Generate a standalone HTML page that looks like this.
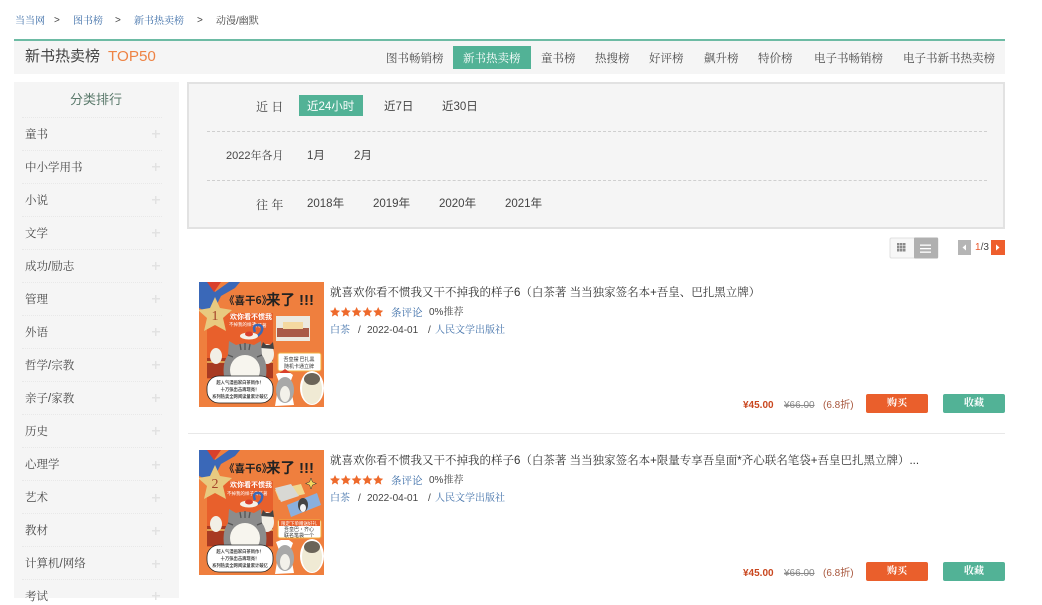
<!DOCTYPE html>
<html lang="zh"><head><meta charset="utf-8"><title>新书热卖榜</title>
<style>
html,body{margin:0;padding:0;background:#fff}
body{width:1042px;height:598px;overflow:hidden;position:relative;font-family:"Liberation Sans","Noto Serif CJK SC",serif;font-size:11.5px;color:#444;filter:blur(.3px)}
.a{position:absolute;white-space:nowrap;line-height:16px}
.s{font-family:"Liberation Sans","Noto Sans CJK SC",sans-serif}
.b{color:#3d6ea8}
.bx{position:absolute}
.cat{position:absolute;left:25px;line-height:16px;color:#4a4a4a;white-space:nowrap}
.plus{position:absolute;left:152px;width:8px;height:8px;background:linear-gradient(#e2e2e2,#e2e2e2) center/8px 1.5px no-repeat,linear-gradient(#e2e2e2,#e2e2e2) center/1.5px 8px no-repeat}
.sep{position:absolute;left:22px;width:140px;border-top:1px dotted #e8e8e8}
.tab{position:absolute;top:51px;line-height:16px;color:#4d4d4d;white-space:nowrap}
.dash{position:absolute;left:207px;width:780px;border-top:1px dashed #cfcfcf}
.btn{position:absolute;width:62px;height:19px;line-height:20px;text-align:center;color:#fff;font-size:10px;font-weight:700;border-radius:2px}
</style></head><body>
<span class="a b" style="left:15px;top:14px;font-size:10px">当当网</span>
<span class="a" style="left:54px;top:13px;font-size:10px">&gt;</span>
<span class="a b" style="left:73px;top:14px;font-size:10px">图书榜</span>
<span class="a" style="left:115px;top:13px;font-size:10px">&gt;</span>
<span class="a b" style="left:134px;top:14px;font-size:10px">新书热卖榜</span>
<span class="a" style="left:197px;top:13px;font-size:10px">&gt;</span>
<span class="a" style="left:216px;top:14px;font-size:10px">动漫/幽默</span>

<div class="bx" style="left:14px;top:39px;width:991px;height:35px;background:#f5f5f5;border-top:2px solid #6dbba4;box-sizing:border-box"></div>
<span class="a s" style="left:25px;top:47px;font-size:15px;line-height:20px;color:#444">新书热卖榜</span>
<span class="a s" style="left:108px;top:47px;font-size:15.200px;line-height:20px;color:#ee8344">TOP50</span>
<div class="bx" style="left:453px;top:46px;width:78px;height:23px;background:#52b296"></div>
<span class="tab" style="left:386px">图书畅销榜</span>
<span class="tab" style="left:463px;color:#fff">新书热卖榜</span>
<span class="tab" style="left:541px">童书榜</span>
<span class="tab" style="left:595px">热搜榜</span>
<span class="tab" style="left:649px">好评榜</span>
<span class="tab" style="left:704px">飙升榜</span>
<span class="tab" style="left:758px">特价榜</span>
<span class="tab" style="left:814px">电子书畅销榜</span>
<span class="tab" style="left:903px">电子书新书热卖榜</span>

<div class="bx" style="left:14px;top:82px;width:165px;height:516px;background:#f5f5f5"></div>
<span class="a s" style="left:70px;top:91px;font-size:13px;line-height:18px;color:#5b7a6c">分类排行</span>
<div class="sep" style="top:117px"></div><span class="cat" style="top:127px">童书</span><i class="plus" style="top:130px"></i>
<div class="sep" style="top:150px"></div><span class="cat" style="top:160px">中小学用书</span><i class="plus" style="top:163px"></i>
<div class="sep" style="top:183px"></div><span class="cat" style="top:193px">小说</span><i class="plus" style="top:196px"></i>
<div class="sep" style="top:216px"></div><span class="cat" style="top:226px">文学</span><i class="plus" style="top:229px"></i>
<div class="sep" style="top:249px"></div><span class="cat" style="top:259px">成功/励志</span><i class="plus" style="top:262px"></i>
<div class="sep" style="top:282px"></div><span class="cat" style="top:292px">管理</span><i class="plus" style="top:295px"></i>
<div class="sep" style="top:315px"></div><span class="cat" style="top:325px">外语</span><i class="plus" style="top:328px"></i>
<div class="sep" style="top:348px"></div><span class="cat" style="top:358px">哲学/宗教</span><i class="plus" style="top:361px"></i>
<div class="sep" style="top:381px"></div><span class="cat" style="top:391px">亲子/家教</span><i class="plus" style="top:394px"></i>
<div class="sep" style="top:414px"></div><span class="cat" style="top:424px">历史</span><i class="plus" style="top:427px"></i>
<div class="sep" style="top:447px"></div><span class="cat" style="top:457px">心理学</span><i class="plus" style="top:461px"></i>
<div class="sep" style="top:480px"></div><span class="cat" style="top:490px">艺术</span><i class="plus" style="top:494px"></i>
<div class="sep" style="top:513px"></div><span class="cat" style="top:523px">教材</span><i class="plus" style="top:527px"></i>
<div class="sep" style="top:546px"></div><span class="cat" style="top:556px">计算机/网络</span><i class="plus" style="top:560px"></i>
<div class="sep" style="top:579px"></div><span class="cat" style="top:589px">考试</span><i class="plus" style="top:592px"></i>

<div class="bx" style="left:187px;top:82px;width:818px;height:147px;box-sizing:border-box;background:#f5f5f5;border:2px solid #e2e2e2"></div>
<span class="a" style="left:256px;top:99px;font-size:12px">近 日</span>
<div class="bx" style="left:299px;top:95px;width:64px;height:21px;background:#52b296"></div>
<span class="a s" style="left:307px;top:98.500px;color:#fff">近24小时</span>
<span class="a s" style="left:384px;top:98.500px">近7日</span>
<span class="a s" style="left:442px;top:98.500px">近30日</span>
<div class="dash" style="top:131px"></div>
<span class="a" style="left:226px;top:148px;font-size:11px">2022年各月</span>
<span class="a s" style="left:307px;top:147.500px">1月</span>
<span class="a s" style="left:354px;top:147.500px">2月</span>
<div class="dash" style="top:180px"></div>
<span class="a" style="left:256px;top:197px;font-size:12px">往 年</span>
<span class="a s" style="left:307px;top:195.500px">2018年</span>
<span class="a s" style="left:373px;top:195.500px">2019年</span>
<span class="a s" style="left:439px;top:195.500px">2020年</span>
<span class="a s" style="left:505px;top:195.500px">2021年</span>

<svg class="bx" style="left:889px;top:237px" width="116" height="22" viewBox="0 0 116 22">
<rect x="1" y="1" width="48" height="20" rx="1.500" fill="#f7f7f7" stroke="#e0e0e0"/>
<rect x="25" y="0.500" width="24" height="21" rx="1" fill="#b0b0b0"/>
<g fill="#8a8a8a"><rect x="8" y="6" width="2.500" height="2.500"/><rect x="11" y="6" width="2.500" height="2.500"/><rect x="14" y="6" width="2.500" height="2.500"/><rect x="8" y="9" width="2.500" height="2.500"/><rect x="11" y="9" width="2.500" height="2.500"/><rect x="14" y="9" width="2.500" height="2.500"/><rect x="8" y="12" width="2.500" height="2.500"/><rect x="11" y="12" width="2.500" height="2.500"/><rect x="14" y="12" width="2.500" height="2.500"/></g>
<g fill="#fff"><rect x="31" y="7.500" width="11" height="1.300"/><rect x="31" y="11" width="11" height="1.300"/><rect x="31" y="14.500" width="11" height="1.300"/></g>
<rect x="69" y="3" width="13" height="15" fill="#b5b5b5"/><path d="M77 7.500v6l-3.500-3z" fill="#fff"/>
<rect x="102" y="3" width="14" height="15" fill="#ee5e2d"/><path d="M107 7.500v6l3.500-3z" fill="#fff"/>
</svg>
<span class="a s" style="left:975px;top:240px;font-size:10px;color:#444"><span style="color:#e8562a">1</span>/3</span>

<svg class="bx" style="left:199px;top:282px" width="125" height="125" viewBox="0 0 125 125">
<rect width="125" height="125" fill="#ef7f3e"/>
<path d="M0 0h10l6 10 14-10h11l-5 6-14 8-6 12-8 4-8-4z" fill="#3a68b8"/><path d="M8 0h14l-7 10z" fill="#d9402c"/>
<rect x="8" y="31" width="66" height="66" fill="#e8602c"/>
<text x="31" y="37" font-size="7" fill="#fff" font-weight="700" font-family="Noto Sans CJK SC,sans-serif">欢你看不惯我</text>
<text x="30" y="44" font-size="4.500" fill="#fff" font-family="Noto Sans CJK SC,sans-serif">不掉我的样子</text>
<text x="54" y="45" font-size="4.500" fill="#fff" font-family="Noto Sans CJK SC,sans-serif">白茶著</text>
<text x="25" y="22" font-size="10.500" font-weight="700" fill="#222" font-family="Noto Sans CJK SC,sans-serif">《喜干6》</text>
<text x="67" y="23" font-size="14.500" font-weight="700" fill="#222" font-family="Noto Sans CJK SC,sans-serif">来了</text>
<text x="100" y="23" font-size="15" font-weight="700" fill="#222" font-family="Liberation Sans,sans-serif">!!!</text>
<path d="M56 50q-3-7 3-7 5 0 4 5-1 4-5 6" fill="none" stroke="#3a68b8" stroke-width="2.500"/>
<path d="M16 15l5 11 12 2-9 8 3 13-11-6-11 6 3-13-9-8 12-2z" fill="#e8ca80"/>
<text x="16" y="38" text-anchor="middle" font-size="14" fill="#a4442a" font-family="Liberation Serif,serif">1</text>
<rect x="8" y="76" width="66" height="20" fill="#a83a22"/><path d="M8 80h66" stroke="#f0c060" stroke-width="1.500"/>
<ellipse cx="17" cy="74" rx="6" ry="8" fill="#f2efe6"/><ellipse cx="68" cy="72" rx="7" ry="10" fill="#f2efe6"/><path d="M62 66l2-6 3 3h4l3-3 1 7z" fill="#444"/>
<path d="M26 100q-4-18 3-27l1-14 7 4q9-3 18 0l7-4 1 14q7 9 3 27z" fill="#8c8c8c"/>
<ellipse cx="46" cy="88" rx="15" ry="15" fill="#f7f5ee"/>
<path d="M41 62l1 6M46 61v7M51 62l-1 6M29 73l5 2M63 73l-5 2" stroke="#555" stroke-width="1.300"/>
<ellipse cx="50" cy="54" rx="9" ry="3.500" fill="#f5f1e8"/><ellipse cx="50" cy="52" rx="4" ry="2.500" fill="#d9402c"/>
<rect x="77" y="34" width="34" height="25" fill="#ece9e0"/><rect x="78" y="46" width="32" height="9" fill="#a95a48"/><rect x="84" y="40" width="20" height="7" fill="#f4d8a0"/>
<rect x="79" y="71" width="43" height="18" rx="2" fill="#fff" stroke="#f0b040"/>
<text x="100" y="79" text-anchor="middle" font-size="5" fill="#333" font-family="Noto Sans CJK SC,sans-serif">吾皇摆 巴扎黑</text>
<text x="100" y="86" text-anchor="middle" font-size="5" fill="#333" font-family="Noto Sans CJK SC,sans-serif">随机卡通立牌</text>
<rect x="8" y="94" width="66" height="27" rx="12" fill="#fff" stroke="#222" stroke-width=".800"/>
<g font-size="4.300" fill="#444" text-anchor="middle" font-family="Noto Sans CJK SC,sans-serif" font-weight="700"><text x="41" y="102">超人气漫画家白茶新作！</text><text x="41" y="109">十万张出击再现亮！</text><text x="41" y="116">系列热卖全网阅读量累计破亿</text></g>
<path d="M76 124l4-24-3-8 5-2 8 0 4 3-3 8 4 22z" fill="#fff"/>
<ellipse cx="86" cy="108" rx="9" ry="13" fill="#a8a8a8"/><ellipse cx="86" cy="112" rx="5" ry="8" fill="#f3f1ea"/><path d="M80 91h12l-6-4z" fill="#d9402c"/>
<ellipse cx="113" cy="106" rx="12" ry="17" fill="#fff"/><ellipse cx="113" cy="107" rx="10" ry="15" fill="#f0ead4"/><ellipse cx="113" cy="97" rx="8" ry="6" fill="#6b6458"/>
</svg>
<span class="a" style="left:330px;top:285px;color:#333">就喜欢你看不惯我又干不掉我的样子6（白茶著 当当独家签名本+吾皇、巴扎黑立牌）</span>
<svg class="bx" style="left:330px;top:307px" width="54" height="10" viewBox="0 0 54 10"><g fill="#ee6a2c"><path d="M5 0l1.500 3.300 3.500.4-2.600 2.400.7 3.500L5 7.800 1.900 9.600l.7-3.500L0 3.700l3.500-.4z"/><path transform="translate(10.800)" d="M5 0l1.500 3.300 3.500.4-2.600 2.400.7 3.500L5 7.800 1.900 9.600l.7-3.500L0 3.700l3.500-.4z"/><path transform="translate(21.600)" d="M5 0l1.500 3.300 3.500.4-2.600 2.400.7 3.500L5 7.800 1.900 9.600l.7-3.500L0 3.700l3.500-.4z"/><path transform="translate(32.400)" d="M5 0l1.500 3.300 3.500.4-2.600 2.400.7 3.500L5 7.800 1.900 9.600l.7-3.500L0 3.700l3.500-.4z"/><path transform="translate(43.200)" d="M5 0l1.500 3.300 3.500.4-2.600 2.400.7 3.500L5 7.800 1.900 9.600l.7-3.500L0 3.700l3.500-.4z"/></g></svg>
<span class="a b" style="left:391px;top:304.500px;font-size:10.500px">条评论</span>
<span class="a" style="left:429px;top:304.500px;font-size:10px">0%推荐</span>
<span class="a b" style="left:330px;top:322.500px;font-size:10px">白茶</span>
<span class="a s" style="left:358px;top:322.500px;font-size:10px;color:#444">/</span>
<span class="a s" style="left:367px;top:322.500px;font-size:10px;color:#444">2022-04-01</span>
<span class="a s" style="left:428px;top:322.500px;font-size:10px;color:#444">/</span>
<span class="a b" style="left:435px;top:322.500px;font-size:10px">人民文学出版社</span>
<span class="a s" style="left:743px;top:398px;font-size:10px;font-weight:700;color:#c9471f">¥45.00</span>
<span class="a s" style="left:784px;top:398px;font-size:10px;color:#888;text-decoration:line-through">¥66.00</span>
<span class="a s" style="left:823px;top:398px;font-size:10px;color:#a8573d">(6.8折)</span>
<div class="btn" style="left:866px;top:394px;background:#ea5f2c">购买</div>
<div class="btn" style="left:943px;top:394px;background:#52b296">收藏</div>
<div class="bx" style="left:188px;top:433px;width:817px;border-top:1px solid #e8e8e8"></div>

<svg class="bx" style="left:199px;top:450px" width="125" height="125" viewBox="0 0 125 125">
<rect width="125" height="125" fill="#ef7f3e"/>
<path d="M0 0h10l6 10 14-10h11l-5 6-14 8-6 12-8 4-8-4z" fill="#3a68b8"/><path d="M8 0h14l-7 10z" fill="#d9402c"/>
<rect x="8" y="31" width="66" height="66" fill="#e8602c"/>
<text x="31" y="37" font-size="7" fill="#fff" font-weight="700" font-family="Noto Sans CJK SC,sans-serif">欢你看不惯我</text>
<text x="28" y="45" font-size="4.500" fill="#fff" font-family="Noto Sans CJK SC,sans-serif">不掉我的样子</text>
<text x="55" y="45" font-size="4.500" fill="#fff" font-family="Noto Sans CJK SC,sans-serif">白茶著</text>
<text x="25" y="22" font-size="10.500" font-weight="700" fill="#222" font-family="Noto Sans CJK SC,sans-serif">《喜干6》</text>
<text x="67" y="23" font-size="14.500" font-weight="700" fill="#222" font-family="Noto Sans CJK SC,sans-serif">来了</text>
<text x="100" y="23" font-size="15" font-weight="700" fill="#222" font-family="Liberation Sans,sans-serif">!!!</text>
<path d="M56 50q-3-7 3-7 5 0 4 5-1 4-5 6" fill="none" stroke="#3a68b8" stroke-width="2.500"/>
<path d="M16 15l5 11 12 2-9 8 3 13-11-6-11 6 3-13-9-8 12-2z" fill="#e8ca80"/>
<text x="16" y="38" text-anchor="middle" font-size="14" fill="#a4442a" font-family="Liberation Serif,serif">2</text>
<rect x="8" y="76" width="66" height="20" fill="#a83a22"/><path d="M8 80h66" stroke="#f0c060" stroke-width="1.500"/>
<ellipse cx="17" cy="74" rx="6" ry="8" fill="#f2efe6"/><ellipse cx="68" cy="72" rx="7" ry="10" fill="#f2efe6"/><path d="M62 66l2-6 3 3h4l3-3 1 7z" fill="#444"/>
<path d="M26 100q-4-18 3-27l1-14 7 4q9-3 18 0l7-4 1 14q7 9 3 27z" fill="#8c8c8c"/>
<ellipse cx="46" cy="88" rx="15" ry="15" fill="#f7f5ee"/>
<path d="M41 62l1 6M46 61v7M51 62l-1 6M29 73l5 2M63 73l-5 2" stroke="#555" stroke-width="1.300"/>
<ellipse cx="50" cy="54" rx="9" ry="3.500" fill="#f5f1e8"/><ellipse cx="50" cy="52" rx="4" ry="2.500" fill="#d9402c"/>
<path d="M76 40l26-6 4 10-26 6z" fill="#f0d890"/><path d="M88 55l30-12 4 12-30 12z" fill="#8ab0de"/><path d="M76 38l16-4 8 12-18 6z" fill="#d8d8d4"/><ellipse cx="104" cy="55" rx="5" ry="7" fill="#444"/><ellipse cx="104" cy="58" rx="3" ry="4" fill="#f5f5f5"/>
<path d="M112 28l1.500 4 4 1.500-4 1.500-1.500 4-1.500-4-4-1.500 4-1.500z" fill="#f6d860" stroke="#333" stroke-width=".500"/>
<rect x="79" y="70" width="43" height="18" rx="2" fill="#fff" stroke="#f0b040"/>
<rect x="80" y="70" width="41" height="6" fill="#e8602c"/>
<text x="100" y="75" text-anchor="middle" font-size="4.500" fill="#fff" font-family="Noto Sans CJK SC,sans-serif">限定下单赠送好礼</text>
<text x="100" y="81" text-anchor="middle" font-size="5" fill="#333" font-family="Noto Sans CJK SC,sans-serif">吾皇巴·齐心</text>
<text x="100" y="87" text-anchor="middle" font-size="5" fill="#333" font-family="Noto Sans CJK SC,sans-serif">联名笔袋一个</text>
<rect x="8" y="95" width="66" height="27" rx="12" fill="#fff" stroke="#222" stroke-width=".800"/>
<g font-size="4.300" fill="#444" text-anchor="middle" font-family="Noto Sans CJK SC,sans-serif" font-weight="700"><text x="41" y="103">超人气漫画家白茶新作！</text><text x="41" y="110">十万张出击再现亮！</text><text x="41" y="117">系列热卖全网阅读量累计破亿</text></g>
<path d="M76 124l4-24-3-8 5-2 8 0 4 3-3 8 4 22z" fill="#fff"/>
<ellipse cx="86" cy="108" rx="9" ry="13" fill="#a8a8a8"/><ellipse cx="86" cy="112" rx="5" ry="8" fill="#f3f1ea"/>
<ellipse cx="113" cy="106" rx="12" ry="17" fill="#fff"/><ellipse cx="113" cy="107" rx="10" ry="15" fill="#f0ead4"/><ellipse cx="113" cy="97" rx="8" ry="6" fill="#6b6458"/>
</svg>
<span class="a" style="left:330px;top:453px;color:#333">就喜欢你看不惯我又干不掉我的样子6（白茶著 当当独家签名本+限量专享吾皇面*齐心联名笔袋+吾皇巴扎黑立牌）...</span>
<svg class="bx" style="left:330px;top:475px" width="54" height="10" viewBox="0 0 54 10"><g fill="#ee6a2c"><path d="M5 0l1.500 3.300 3.500.4-2.600 2.400.7 3.500L5 7.800 1.900 9.600l.7-3.500L0 3.700l3.500-.4z"/><path transform="translate(10.800)" d="M5 0l1.500 3.300 3.500.4-2.600 2.400.7 3.500L5 7.800 1.900 9.600l.7-3.500L0 3.700l3.500-.4z"/><path transform="translate(21.600)" d="M5 0l1.500 3.300 3.500.4-2.600 2.400.7 3.500L5 7.800 1.900 9.600l.7-3.500L0 3.700l3.500-.4z"/><path transform="translate(32.400)" d="M5 0l1.500 3.300 3.500.4-2.600 2.400.7 3.500L5 7.800 1.900 9.600l.7-3.500L0 3.700l3.500-.4z"/><path transform="translate(43.200)" d="M5 0l1.500 3.300 3.500.4-2.600 2.400.7 3.500L5 7.800 1.900 9.600l.7-3.500L0 3.700l3.500-.4z"/></g></svg>
<span class="a b" style="left:391px;top:472.500px;font-size:10.500px">条评论</span>
<span class="a" style="left:429px;top:472.500px;font-size:10px">0%推荐</span>
<span class="a b" style="left:330px;top:490.500px;font-size:10px">白茶</span>
<span class="a s" style="left:358px;top:490.500px;font-size:10px;color:#444">/</span>
<span class="a s" style="left:367px;top:490.500px;font-size:10px;color:#444">2022-04-01</span>
<span class="a s" style="left:428px;top:490.500px;font-size:10px;color:#444">/</span>
<span class="a b" style="left:435px;top:490.500px;font-size:10px">人民文学出版社</span>
<span class="a s" style="left:743px;top:566px;font-size:10px;font-weight:700;color:#c9471f">¥45.00</span>
<span class="a s" style="left:784px;top:566px;font-size:10px;color:#888;text-decoration:line-through">¥66.00</span>
<span class="a s" style="left:823px;top:566px;font-size:10px;color:#a8573d">(6.8折)</span>
<div class="btn" style="left:866px;top:562px;background:#ea5f2c">购买</div>
<div class="btn" style="left:943px;top:562px;background:#52b296">收藏</div>
</body></html>
